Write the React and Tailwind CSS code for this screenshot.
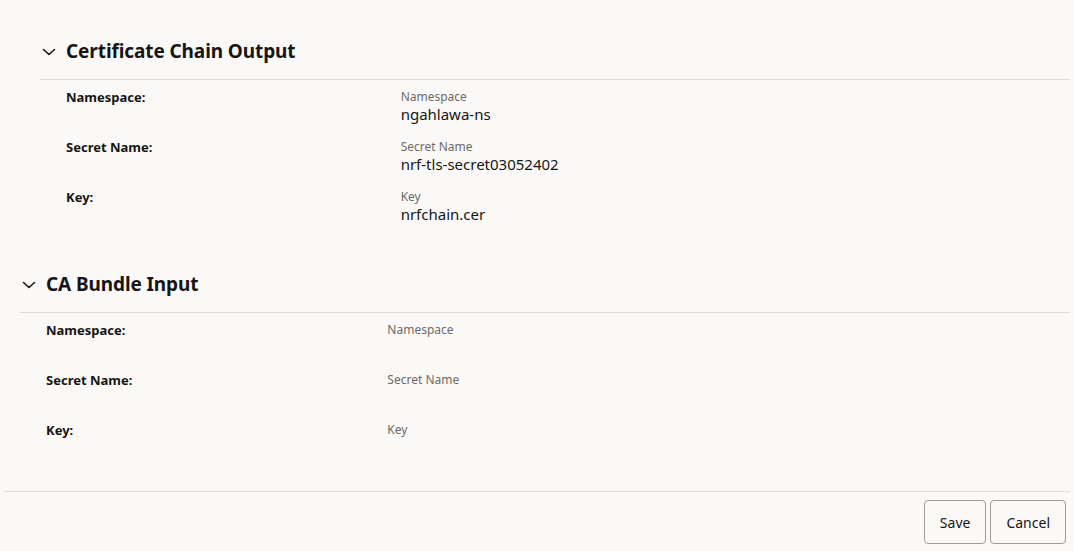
import React from 'react';

const font = { fontFamily: '"Noto Sans", "Open Sans", Arial, sans-serif' };

const Chevron = () => (
  <svg width="14" height="14" viewBox="0 0 14 14" fill="none" className="shrink-0">
    <polyline points="1.5,4.5 7,9.5 12.5,4.5" stroke="#161513" strokeWidth="1.6" strokeLinecap="round" strokeLinejoin="round" />
  </svg>
);

const Row = ({ label, placeholder, value }) => (
  <div className="grid grid-cols-[1fr_2fr] h-[50px]">
    <div className="text-[13px] font-bold text-[#161513] leading-[14px]">{label}</div>
    <div>
      <div className="text-[12px] text-[#6f6a64] leading-[14px]">{placeholder}</div>
      {value && <div className="text-[15px] text-[#161513] leading-[20px]">{value}</div>}
    </div>
  </div>
);

const Section = ({ title, rows, indent }) => (
  <section className={indent}>
    <div className="flex items-center h-[57px] gap-[10px] pl-[2px] pt-[2px]">
      <Chevron />
      <h2 className="text-[19px] font-bold text-[#161513] tracking-[-0.1px]">{title}</h2>
    </div>
    <div className="border-t border-[#dedcda] pt-[10px] pl-[26px]">
      {rows.map((r) => (
        <Row key={r.label} {...r} />
      ))}
    </div>
  </section>
);

export default function App() {
  const output = [
    { label: 'Namespace:', placeholder: 'Namespace', value: 'ngahlawa-ns' },
    { label: 'Secret Name:', placeholder: 'Secret Name', value: 'nrf-tls-secret03052402' },
    { label: 'Key:', placeholder: 'Key', value: 'nrfchain.cer' },
  ];
  const input = [
    { label: 'Namespace:', placeholder: 'Namespace' },
    { label: 'Secret Name:', placeholder: 'Secret Name' },
    { label: 'Key:', placeholder: 'Key' },
  ];

  return (
    <div className="w-[1074px] h-[551px] bg-[#faf9f8] overflow-hidden" style={font}>
      <div className="pt-[22px] pr-[4px]">
        <Section title="Certificate Chain Output" rows={output} indent="ml-[40px]" />
        <div className="h-[15px]" />
        <Section title="CA Bundle Input" rows={input} indent="ml-[20px]" />
      </div>
      <div className="ml-[4px] mr-[4px] mt-[18px] border-t border-[#dedcda] flex justify-end gap-[4px] pt-[8px] pr-[4px]">
        <button className="h-[44px] px-[15px] rounded-[4px] border border-[#9e9a95] text-[14px] text-[#161513] bg-transparent">
          Save
        </button>
        <button className="h-[44px] px-[15px] rounded-[4px] border border-[#9e9a95] text-[14px] text-[#161513] bg-transparent">
          Cancel
        </button>
      </div>
    </div>
  );
}
